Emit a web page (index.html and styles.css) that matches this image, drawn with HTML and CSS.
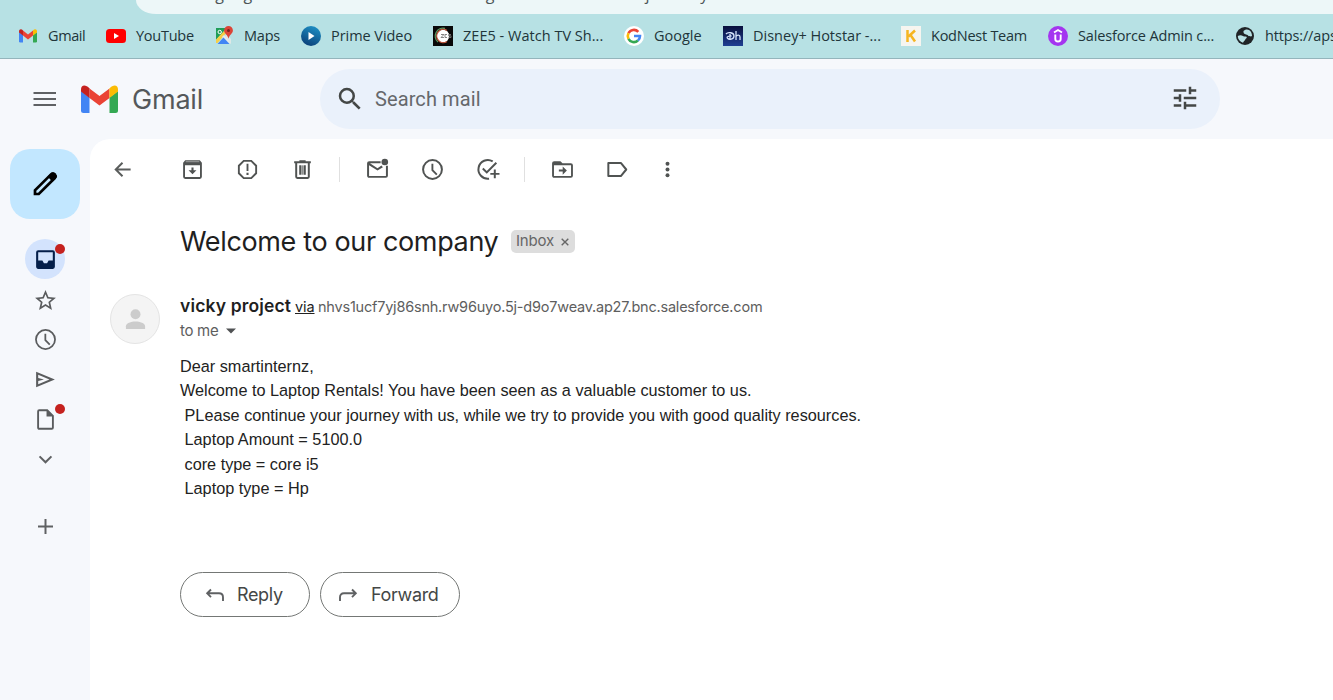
FILE: index.html
```html
<!DOCTYPE html>
<html lang="en">
<head>
<meta charset="utf-8">
<title>Gmail</title>
<link rel="stylesheet" href="styles.css">
</head>
<body>
<div class="browser">
  <div class="address"><span class="url">mail.google.com/mail/u/0/#inbox/FMMfcgzGtxSrBnDLKhZbWvjTVRlxPyNk</span></div>
  <nav class="bookmarks">
    <a class="bm"><svg viewBox="0 0 20 20"><path fill="#4285f4" d="M1 6l4 3v7.500H2.300Q1 16.500 1 15.200z"/><path fill="#34a853" d="M15 9l4-3v9.200Q19 16.500 17.700 16.500H15z"/><path fill="#ea4335" d="M5 4.500l5 4 5-4V9.500l-5 4-5-4z"/><path fill="#c5221f" d="M1 5.500C1 3 3.500 2.600 5 4.500v5L1 6.500z"/><path fill="#fbbc04" d="M19 5.500C19 3 16.500 2.600 15 4.500v5l4-3z"/></svg><span class="t-gmail">Gmail</span></a>
    <a class="bm"><svg viewBox="0 0 20 20"><rect y="3" width="20" height="14" rx="3.500" fill="#f00"/><path fill="#fff" d="M8 7v6l5-3z"/></svg><span class="t-yt">YouTube</span></a>
    <a class="bm maps"><svg viewBox="0 0 20 20"><path fill="#1f9d57" d="M2 2h11L2 14z"/><path fill="#f7cf46" d="M2 13.500L11 4l2 2L3.500 17H2z"/><path fill="#e8eaed" d="M10 9l7 7.500-1 1.500L8 11z"/><path fill="#4285f4" d="M3.500 18l6-6.500 6 6.500z"/><path fill="#dfe8e6" d="M12 8l5 5v5l-6-7z"/><circle cx="5.700" cy="6" r="1.700" fill="none" stroke="#fff"/><path fill="#db4437" d="M14.500 0a4.400 4.400 0 0 1 4.400 4.400c0 3-3.400 4-4.400 8.300-1-4.300-4.400-5.300-4.400-8.300A4.400 4.400 0 0 1 14.500 0z"/><circle cx="14.500" cy="4.500" r="1.500" fill="#7b231c"/></svg><span class="t-maps">Maps</span></a>
    <a class="bm"><svg viewBox="0 0 20 20"><defs><linearGradient id="pv" x1="0.700" y1="0" x2="0.300" y2="1"><stop offset="0" stop-color="#1d8fc4"/><stop offset="1" stop-color="#0b3f78"/></linearGradient></defs><circle cx="10" cy="10" r="10" fill="url(#pv)"/><path fill="#fff" d="M7.500 6v8l6-4z"/></svg><span class="t-prime">Prime Video</span></a>
    <a class="bm"><svg viewBox="0 0 20 20"><rect width="20" height="20" fill="#080808"/><circle cx="10" cy="10" r="6.300" fill="#fff"/><path d="M12 2.500A7.800 7.800 0 0 0 5 16" fill="none" stroke="#5a9b62" stroke-width="1.300"/><path d="M14 4.500a6.600 6.600 0 1 0 0 11" fill="none" stroke="#c4573d" stroke-width="1.300"/><path d="M8 8.500h3l-3 3h3M14 8.500h-2v3h2M18 8.500h-2.500v1.300H18v1.700h-2.500" fill="none" stroke="#777" stroke-width=".9"/></svg><span class="t-zee">ZEE5 - Watch TV Sh...</span></a>
    <a class="bm"><svg viewBox="0 0 20 20"><circle cx="10" cy="10" r="10" fill="#fff"/><g fill="none" stroke-width="2.600"><path stroke="#ea4335" d="M4.500 7.200A6 6 0 0 1 14.300 5.800"/><path stroke="#fbbc05" d="M4.500 7.200a6 6 0 0 0 0 5.600"/><path stroke="#34a853" d="M4.500 12.800a6 6 0 0 0 9.400 1.700"/><path stroke="#4285f4" d="M13.900 14.500A6 6 0 0 0 16 10h-6"/></g></svg><span class="t-google">Google</span></a>
    <a class="bm"><svg viewBox="0 0 20 20"><defs><linearGradient id="dh" x2="0" y2="1"><stop offset="0" stop-color="#080f3c"/><stop offset="1" stop-color="#1f3f93"/></linearGradient></defs><rect width="20" height="20" fill="url(#dh)"/><path d="M3 8c2-2.500 8-1.500 8 2s-5 4-6.500 2.300S6 10 8.500 10M7 8v5M13 5v9M13 10.500c1-2 4-2 4 .5v3" fill="none" stroke="#d6e3fb" stroke-width="1.300"/></svg><span class="t-disney">Disney+ Hotstar -...</span></a>
    <a class="bm"><svg viewBox="0 0 20 20"><rect width="20" height="20" fill="#f6f5f0"/><path d="M6.500 4v12M14 4.500L7.500 10.500M9.500 9l4.500 6.500" fill="none" stroke="#f6b521" stroke-width="2.500"/></svg><span class="t-kod">KodNest Team</span></a>
    <a class="bm"><svg viewBox="0 0 20 20"><circle cx="10" cy="10" r="10" fill="#a435f0"/><path d="M6 6.500L10 4l4 2.500M7.300 8.500V13c0 3.300 5.400 3.300 5.400 0V8.500" fill="none" stroke="#fff" stroke-width="1.900"/></svg><span class="t-sf">Salesforce Admin c...</span></a>
    <a class="bm"><svg viewBox="0 0 20 20"><circle cx="10" cy="10" r="9" fill="#202427"/><path fill="#b7e1e4" d="M2.800 10c2-1.300 3.700-1 5.200 0 1.500.8 2 .3 3.500.8.8 1-.2 1.700-1 2.200-.5 1.500-1.500 2-2.500 3.700C5 15.800 2.900 13.500 2.800 10zM8.500 5c1-1.500 4-2 5.500-1 2 1.200 3 3.500 3 6-1.200 1-2-.2-3.300.2-1-.8-1.200-1.700-2.700-1.700-1.500-.3-3-1.500-2.500-3.500z"/></svg><span class="t-url">https://aps</span></a>
  </nav>
</div>

<div class="app">
  <header class="top">
    <svg class="menu" viewBox="0 0 23 16"><path d="M.5 2h23M.5 8h23M.5 14h23" stroke="#5f6164" stroke-width="2.200"/></svg>
    <svg class="logo" viewBox="0 0 37 28"><path fill="#4285f4" d="M0 6l8.500 6.500V28H2.500Q0 28 0 25.500z"/><path fill="#34a853" d="M28.500 12.500L37 6v19.500Q37 28 34.500 28h-6z"/><path fill="#ea4335" d="M8.500 3.500l10 7.500 10-7.500v9.500l-10 7.500-10-7.500z"/><path fill="#c5221f" d="M0 4.500C0 0 4.500-1 8.500 3.500V13L0 6.500z"/><path fill="#fbbc04" d="M37 4.500C37 0 32.500-1 28.500 3.500V13L37 6.500z"/></svg>
    <span class="brand">Gmail</span>
    <div class="search">
      <svg class="i30" viewBox="0 0 24 24"><path d="M15.500 14h-.79l-.28-.27A6.470 6.470 0 0 0 16 9.500 6.500 6.500 0 1 0 9.500 16c1.610 0 3.090-.59 4.230-1.570l.27.28v.79l5 4.990L20.490 19zm-6 0a4.500 4.500 0 1 1 0-9 4.500 4.500 0 0 1 0 9z"/></svg>
      <span class="placeholder">Search mail</span>
      <svg class="i30 tune" viewBox="0 0 24 24"><path d="M3 17v2h6v-2zM3 5v2h10V5zm10 16v-2h8v-2h-8v-2h-2v6zM7 9v2H3v2h4v2h2V9zm14 4v-2H11v2zm-6-4h2V7h4V5h-4V3h-2z"/></svg>
    </div>
  </header>

  <div class="main">
    <aside class="rail">
      <div class="compose"><svg viewBox="0 0 30 30" fill="none" stroke="#000"><path d="M5 25v-3.800L21 5.400Q22.500 4 24.500 5.600 26.200 7.500 24.600 9.200L8.800 25z" stroke-width="2.700"/><path d="M17.500 7.500l4-3.800q2-1.200 4.200.8 2 2.200.8 4.200l-4 4z" fill="#000" stroke="none"/></svg></div>
      <div class="ri inbox"><svg viewBox="0 0 24 24"><path fill="#041e49" fill-rule="evenodd" d="M19 3H5a2 2 0 0 0-2 2v14c0 1.100.9 2 2 2h14a2 2 0 0 0 2-2V5a2 2 0 0 0-2-2zm0 10h-4l-1.500 2.500h-3L9 13H5V5h14z"/></svg><i class="dot"></i></div>
      <div class="ri star"><svg viewBox="0 0 24 24"><path d="M22 9.240l-7.190-.62L12 2 9.190 8.630 2 9.240l5.460 4.730L5.820 21 12 17.270 18.180 21l-1.630-7.030zM12 15.400l-3.760 2.270 1-4.280-3.320-2.880 4.380-.38L12 6.100l1.710 4.040 4.380.38-3.320 2.880 1 4.280z"/></svg></div>
      <div class="ri"><svg viewBox="0 0 24 24"><path d="M12 2a10 10 0 1 0 0 20 10 10 0 0 0 0-20zm0 18.300a8.300 8.300 0 1 1 0-16.600 8.300 8.300 0 0 1 0 16.600zM11 6.500h1.700v5.800l4 4-1.200 1.200L11 13z"/></svg></div>
      <div class="ri"><svg viewBox="0 0 24 24"><path d="M3 4.500v15L21 12zM5 7.500L15.800 12 5 16.500v-3L10.500 12 5 10.500z" fill-rule="evenodd"/></svg></div>
      <div class="ri"><svg viewBox="0 0 24 24"><path fill-rule="evenodd" d="M14 2.200H6a2 2 0 0 0-2 2v15.600c0 1.100.9 2 2 2h12a2 2 0 0 0 2-2V8.200zM5.800 20V4H13v5.200h5.200V20z"/></svg><i class="dot"></i></div>
      <div class="ri"><svg viewBox="0 0 24 24"><path d="M6.300 9l5.700 5.700L17.700 9" fill="none" stroke="#5f6163" stroke-width="2"/></svg></div>
      <div class="ri plus"><svg viewBox="0 0 24 24"><path d="M12 4.800v14.400M4.800 12h14.400" fill="none" stroke="#5f6163" stroke-width="1.900"/></svg></div>
    </aside>

    <main class="panel">
      <div class="toolbar">
        <span class="tb back"><svg viewBox="0 0 24 24"><path d="M19.800 12H6M12 5.500L5.500 12l6.500 6.500" fill="none" stroke="#5a5d5c" stroke-width="1.900"/></svg></span>
        <span class="tb"><svg viewBox="0 0 24 24"><path fill-rule="evenodd" d="M5 3h14l2 2.500V19a2 2 0 0 1-2 2H5a2 2 0 0 1-2-2V5.500zm-.2 5v11.200h14.400V8zM11 10h2v2.700h2.800L12 16.500l-3.800-3.800H11z"/><path d="M5.500 4.500h13" stroke="#9a9c9b"/></svg></span>
        <span class="tb"><svg viewBox="0 0 24 24"><path fill-rule="evenodd" d="M8 2.800h8L21.200 8v8L16 21.200H8L2.800 16V8zm.8 1.800L4.600 8.800v6.400l4.200 4.200h6.400l4.200-4.200V8.800l-4.200-4.200zM11.100 6.500h1.800v7h-1.800zM11 15.200h2v2h-2z"/></svg></span>
        <span class="tb"><svg viewBox="0 0 24 24"><path fill-rule="evenodd" d="M15 4V3H9v1H4v2h1v13a2 2 0 0 0 2 2h10a2 2 0 0 0 2-2V6h1V4zM6.900 6h10.200v13.200H6.900z"/><path d="M9.700 8v9M14.300 8v9" stroke="#505352" stroke-width="1.700"/><path d="M12 8v9" stroke="#8d8f8e" stroke-width="2.500"/></svg></span>
        <i class="sep"></i>
        <span class="tb"><svg viewBox="0 0 24 24"><path fill-rule="evenodd" d="M15 4H4a2 2 0 0 0-2 2v12c0 1.100.9 2 2 2h16a2 2 0 0 0 2-2V8.500h-1.900V18.200H3.900V8l8.100 5 5.200-3.250-1.400-1.500L12 10.700 4.800 5.900H15z"/><circle cx="19" cy="4.800" r="3.200"/></svg></span>
        <span class="tb"><svg viewBox="0 0 24 24"><path d="M12 2a10 10 0 1 0 0 20 10 10 0 0 0 0-20zm0 18.100a8.100 8.100 0 1 1 0-16.200 8.100 8.100 0 0 1 0 16.200zM11 6.500h1.800v5.800l4 4-1.300 1.200L11 13z"/></svg></span>
        <span class="tb"><svg viewBox="0 0 24 24"><g fill="none" stroke="#505352" stroke-width="1.900"><path d="M17 4.200A9 9 0 1 0 13.500 20.800M20.500 5.500L11.300 14.800 7.500 11"/><path d="M19 12v8.500M14.700 16.200h8.800"/></g></svg></span>
        <i class="sep"></i>
        <span class="tb"><svg viewBox="0 0 24 24"><path fill-rule="evenodd" d="M20 6h-8l-2-2H4a2 2 0 0 0-2 2v12c0 1.100.9 2 2 2h16a2 2 0 0 0 2-2V8a2 2 0 0 0-2-2zm.2 12.200H3.800V7.900h16.400zM12.200 17l4-4-4-4v3H8.500v2h3.700z"/></svg></span>
        <span class="tb"><svg viewBox="0 0 24 24"><path d="M3.200 5.700h12L20.400 12l-5.200 6.300h-12z" fill="none" stroke="#505352" stroke-width="1.900" stroke-linejoin="round"/></svg></span>
        <span class="tb more"><svg viewBox="0 0 24 24"><circle cx="12" cy="6.500" r="1.900"/><circle cx="12" cy="12" r="1.900"/><circle cx="12" cy="17.500" r="1.900"/></svg></span>
      </div>

      <div class="subject"><h1>Welcome to our company</h1><span class="chip"><span class="chiptext">Inbox</span><svg viewBox="0 0 8 8"><path d="M.7.7l6.600 6.600M7.300.7L.7 7.300" stroke="#666" stroke-width="1.400"/></svg></span></div>

      <article class="message">
        <div class="avatar"><svg viewBox="0 0 24 24"><circle cx="12" cy="7" r="4.800"/><path d="M2.800 21v-2.500c0-3 5-4.500 9.200-4.500s9.200 1.500 9.200 4.500V21z"/></svg></div>
        <div class="content">
          <div class="from"><b>vicky project</b><u>via</u><span class="domain">nhvs1ucf7yj86snh.rw96uyo.5j-d9o7weav.ap27.bnc.salesforce.com</span></div>
          <div class="to"><span>to me</span><svg viewBox="0 0 10 6"><path d="M0 .5h10L5 5.500z" fill="#505254"/></svg></div>
          <div class="text">
            <p>Dear smartinternz,</p>
            <p>Welcome to Laptop Rentals! You have been seen as a valuable customer to us.</p>
            <p> PLease continue your journey with us, while we try to provide you with good quality resources.</p>
            <p> Laptop Amount = 5100.0</p>
            <p> core type = core i5</p>
            <p> Laptop type = Hp</p>
          </div>
          <div class="actions">
            <span class="btn reply"><svg viewBox="0 0 20 16"><path d="M6 2.500L2.200 6.300 6 10.100M2.200 6.300H14q4 0 4 4V14" fill="none" stroke="#5f6163" stroke-width="1.900"/></svg><span>Reply</span></span>
            <span class="btn forward"><svg viewBox="0 0 20 16"><path d="M14 2.500l3.800 3.800L14 10.100M17.800 6.300H6q-4 0-4 4V14" fill="none" stroke="#5f6163" stroke-width="1.900"/></svg><span>Forward</span></span>
          </div>
        </div>
      </article>
    </main>
  </div>
</div>
</body>
</html>
```
FILE: styles.css
```css
* { box-sizing: border-box; }
body { margin: 0; width: 1333px; height: 700px; overflow: hidden; background: #f6f8fc; font-family: Inter, "Liberation Sans", sans-serif; color: #1f1f1f; }
svg { display: block; flex: none; }

.browser { height: 59px; background: #b7e1e4; border-bottom: 1px solid #94b5bc; font-family: "Open Sans", sans-serif; }
.address { height: 14px; margin-left: 136px; background: #edf7f8; border-bottom-left-radius: 20px 14px; overflow: hidden; padding-left: 43px; }
.url { display: block; font-size: 16px; line-height: 20px; margin-top: -16px; letter-spacing: .07px; color: #4c5557; white-space: nowrap; }
.bookmarks { height: 44px; padding-left: 18px; display: grid; grid-template-columns: 88px 109px 86px 132px 191px 99px 178px 147px 187px 98px; align-items: center; overflow: hidden; }
.bm { display: flex; align-items: center; gap: 10px; font-size: 14.500px; line-height: 20px; color: #21353a; white-space: nowrap; }
.bm svg { width: 20px; height: 20px; }
.maps { margin-left: -1px; }
.t-gmail { letter-spacing: -.4px; }
.t-yt { letter-spacing: -.25px; }
.t-maps { letter-spacing: -.2px; }
.t-prime { letter-spacing: -.05px; }
.t-zee { letter-spacing: .02px; }
.t-kod { letter-spacing: -.25px; }
.t-sf { letter-spacing: -.15px; }
.t-url { letter-spacing: -.15px; }

.top { height: 80px; display: flex; align-items: center; }
.menu { width: 23px; height: 16px; margin-left: 33px; }
.logo { width: 37px; height: 28px; margin-left: 25px; }
.brand { margin-left: 14px; width: 188px; font-size: 27px; letter-spacing: -.2px; color: #55585b; }
.search { width: 900px; height: 60px; border-radius: 30px; background: #eaf1fb; display: flex; align-items: center; padding: 0 20px 0 15px; fill: #444746; }
.i30 { width: 30px; height: 30px; }
.tune { margin-top: -2px; }
.placeholder { flex: 1; margin-left: 10px; font: 20px Roboto, sans-serif; letter-spacing: .1px; color: #65686b; }

.main { display: flex; height: 561px; }
.rail { width: 90px; display: flex; flex-direction: column; align-items: center; padding-top: 10px; fill: #5a5c5e; }
.compose { width: 70px; height: 70px; border-radius: 20px; background: #c2e7ff; display: flex; align-items: center; justify-content: center; margin-bottom: 20px; }
.compose svg { width: 30px; height: 30px; }
.ri { position: relative; width: 40px; height: 40px; display: flex; align-items: center; justify-content: center; }
.ri svg { width: 25px; height: 25px; }
.star { padding-top: 2px; }
.inbox { border-radius: 50%; background: #d3e3fd; }
.dot { position: absolute; right: 0; top: 5px; width: 10px; height: 10px; border-radius: 50%; background: #c5221f; }
.plus { margin-top: 27px; }

.panel { flex: 1; background: #fff; border-top-left-radius: 20px; }
.toolbar { height: 61px; padding-left: 5px; display: flex; align-items: center; fill: #505352; }
.tb { width: 55px; display: flex; justify-content: center; }
.tb svg { width: 25px; height: 25px; }
.back { margin-right: 15px; }
.sep { width: 1px; height: 25px; background: #e0e0e0; margin: 0 10px 0 9px; }
.more { width: 45px; }

.subject { display: flex; align-items: center; height: 50px; margin-top: 17px; padding-left: 90px; }
h1 { margin: 0; width: 331px; font-size: 27px; font-weight: 400; letter-spacing: -.36px; line-height: 36px; white-space: nowrap; }
.chip { width: 64px; height: 23px; margin-top: -1px; border-radius: 5px; background: #ddd; display: flex; align-items: center; gap: 7px; padding-left: 5px; color: #666; font-size: 15px; letter-spacing: -.2px; line-height: 20px; }
.chiptext { margin-top: -2px; }
.chip svg { width: 8px; height: 8px; }

.message { display: flex; gap: 20px; padding: 27px 0 0 20px; }
.avatar { width: 50px; height: 50px; border-radius: 50%; background: #f4f4f4; border: 1px solid #e4e4e4; display: flex; align-items: center; justify-content: center; fill: #ccc; }
.avatar svg { width: 25px; height: 25px; }
.content { margin-top: -1px; }
.from { display: flex; align-items: baseline; height: 25px; line-height: 25px; white-space: nowrap; font-size: 15px; color: #5e5e5e; }
.from b { width: 115px; font-size: 17.500px; letter-spacing: .15px; font-weight: 600; color: #1f1f1f; }
.from u { width: 23px; font-size: 14.500px; letter-spacing: -.1px; color: #222; }
.domain { font-size: 14.500px; letter-spacing: -.21px; }
.to { display: flex; align-items: center; gap: 8px; height: 25px; font-size: 15px; letter-spacing: -.3px; color: #5e5e5e; }
.to svg { width: 10px; height: 6px; }
.text { margin-top: 11px; font: 16.250px/24.380px "Liberation Sans", Arial, sans-serif; color: #222; }
.text p { margin: 0; white-space: pre; }
.actions { display: flex; gap: 10px; margin-top: 72px; }
.btn { height: 45px; border: 1px solid #747775; border-radius: 23px; display: flex; align-items: center; padding-left: 24px; color: #444746; font-size: 18px; letter-spacing: -.35px; line-height: 24px; }
.btn svg { width: 20px; height: 16px; margin: 1px 13px 0 0; }
.reply { width: 130px; }
.reply svg { margin-right: 12px; }
.forward { width: 140px; padding-left: 17px; }
```
